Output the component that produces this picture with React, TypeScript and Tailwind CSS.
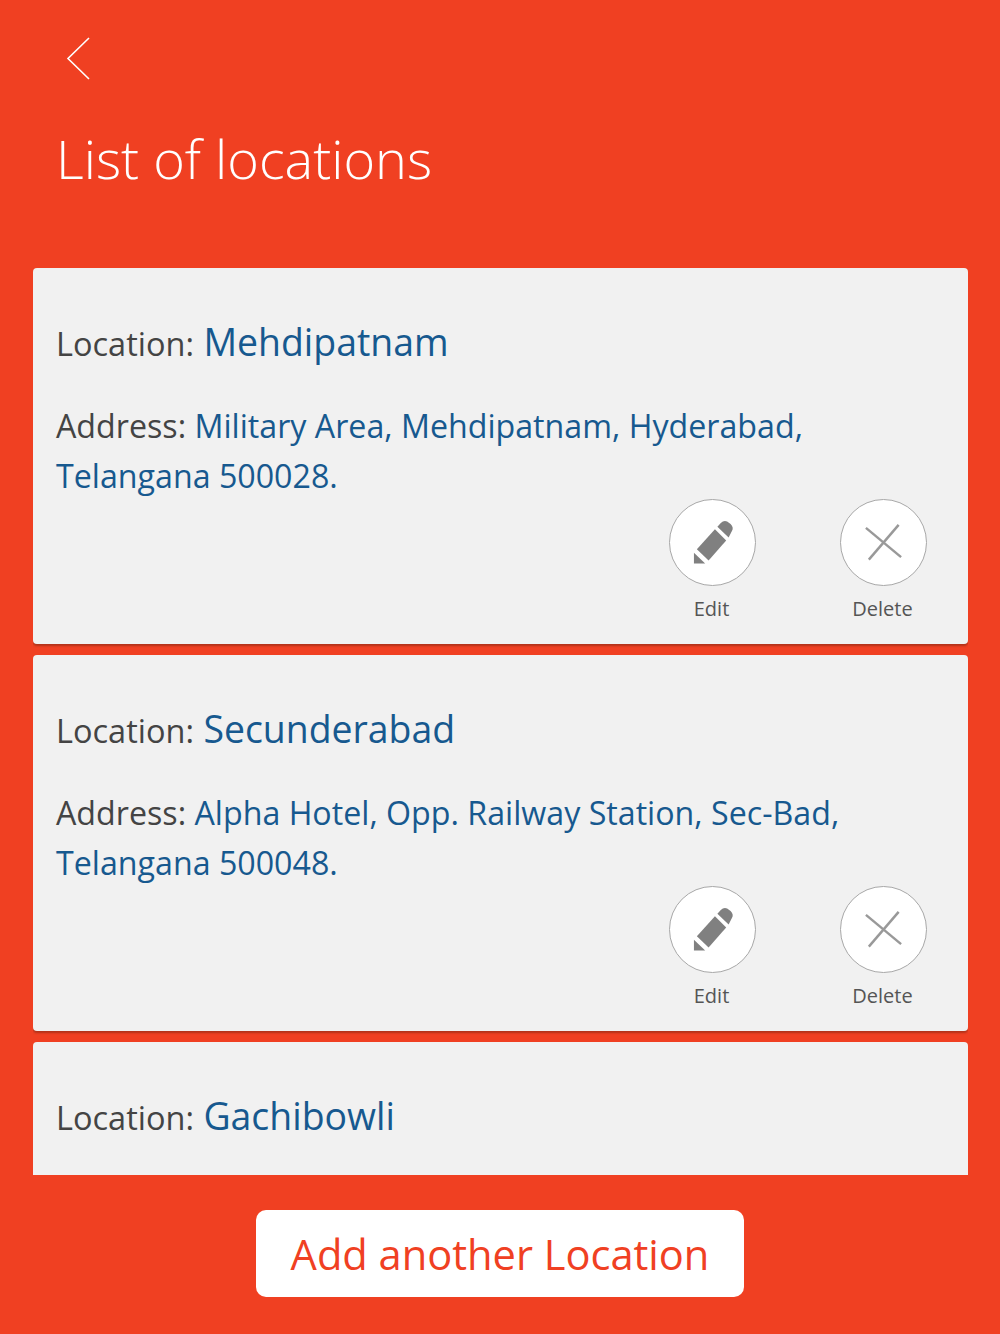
import React from 'react';

const locations = [
  { name: 'Mehdipatnam', line1: 'Military Area, Mehdipatnam, Hyderabad,', line2: 'Telangana 500028.' },
  { name: 'Secunderabad', line1: 'Alpha Hotel, Opp. Railway Station, Sec-Bad,', line2: 'Telangana 500048.' },
  { name: 'Gachibowli', line1: '', line2: '' },
];

const ActionButton: React.FC<{ label: string; children: React.ReactNode }> = ({ label, children }) => (
  <button className="flex w-[87px] flex-col items-center">
    <span className="flex h-[87px] w-[87px] items-center justify-center rounded-full border border-[#a8a8a8] bg-white">
      {children}
    </span>
    <span className="mt-[9px] pr-[2px] text-[20px] leading-[28px] text-[#555555]">{label}</span>
  </button>
);

const PencilIcon = () => (
  <svg width="87" height="87" viewBox="0 0 87 87" fill="#808080">
    <path d="M24.5 54 L24.5 65 L36 65 Z" />
    <path d="M27.5 50.5 L46 30 L57.5 41.5 L39.5 62 Z" />
    <path d="M48.5 27.5 L52 23.5 Q55 20.5 58.5 22 L62 24.5 Q65.5 28 63.5 31.5 L60 38.5 Z" />
  </svg>
);

const CrossIcon = () => (
  <svg width="87" height="87" viewBox="0 0 87 87" fill="none" stroke="#999999" strokeWidth="2.5">
    <path d="M25.5 28.5 L61.5 58.5" />
    <path d="M59 25.5 L28.5 61" />
  </svg>
);

const LocationCard: React.FC<{ name: string; line1: string; line2: string }> = ({ name, line1, line2 }) => (
  <div className="h-[376px] shrink-0 rounded-[4px] bg-[#f1f1f1] px-[23px] pt-[44px] shadow-[0_2px_2px_rgba(120,40,20,0.5)]">
    <p className="h-[60px] text-[32.5px] leading-[60px] text-[#444444]">
      Location: <span className="ml-[1px] text-[37.4px] text-[#17598f]">{name}</span>
    </p>
    {line1 && (
      <>
        <p className="mt-[29px] text-[32.2px] leading-[50px] text-[#444444]">
          Address: <span className="text-[#17598f]">{line1}</span>
          <br />
          <span className="text-[#17598f]">{line2}</span>
        </p>
        <div className="mt-[-2px] flex justify-end gap-[84px] pr-[18px]">
          <ActionButton label="Edit">
            <PencilIcon />
          </ActionButton>
          <ActionButton label="Delete">
            <CrossIcon />
          </ActionButton>
        </div>
      </>
    )}
  </div>
);

export default function App() {
  return (
    <div className="flex h-[1334px] w-[1000px] flex-col overflow-hidden bg-[#f04022] font-['Open_Sans',sans-serif]">
      <header className="h-[268px] shrink-0 pl-[56px] pt-[37px]">
        <svg width="26" height="44" viewBox="0 0 26 44" fill="none" stroke="white" strokeWidth="1.6" className="ml-[10px]">
          <path d="M23 1 L2 21.5 L23 42" />
        </svg>
        <h1 className="mt-[39px] text-[54px] font-light leading-[76px] text-white">List of locations</h1>
      </header>
      <div className="ml-[33px] mr-[32px] flex h-[907px] shrink-0 flex-col gap-[11px] overflow-hidden">
        {locations.map((loc) => (
          <LocationCard key={loc.name} {...loc} />
        ))}
      </div>
      <div className="flex justify-center pt-[35px]">
        <button className="h-[87px] w-[488px] rounded-[10px] bg-white pt-[2px] text-[41.6px] text-[#f04022]">
          Add another Location
        </button>
      </div>
    </div>
  );
}
